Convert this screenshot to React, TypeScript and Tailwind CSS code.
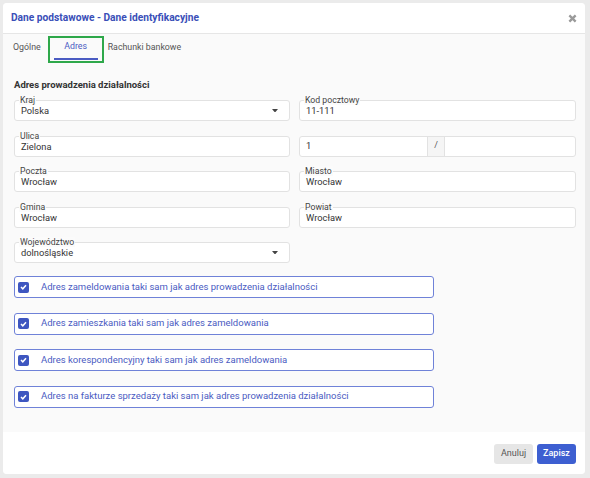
import React from 'react';

const font = { fontFamily: 'Roboto, "Liberation Sans", sans-serif' };

function Field({ label, value, select }: { label?: string; value: string; select?: boolean }) {
  return (
    <div className="relative h-[21px] rounded-[3px] border border-[#e2e2e2] bg-white flex items-center pl-[6px] pr-[8px]">
      {label && (
        <span className="absolute left-[4px] top-[-6px] px-[1px] bg-[#fbfbfb] text-[8.7px] leading-[10px] text-[#444]">
          {label}
        </span>
      )}
      <span className="flex-1 text-[9.3px] text-[#333] pt-[1px]">{value}</span>
      {select && (
        <svg width="6" height="3.5" viewBox="0 0 6 3.5" className="mr-[3px]">
          <path d="M0 0h6L3 3.5z" fill="#444" />
        </svg>
      )}
    </div>
  );
}

function Check({ text }: { text: string }) {
  return (
    <div className="h-[22px] w-[420px] rounded-[3px] border border-[#6f82d8] bg-white flex items-center pl-[3px] gap-[12px]">
      <span className="w-[11px] h-[11px] rounded-[2px] bg-[#3e56c0] flex items-center justify-center">
        <svg width="7" height="6" viewBox="0 0 7 6">
          <path d="M1 3l1.8 1.8L6 1.2" stroke="#fff" strokeWidth="1.5" fill="none" />
        </svg>
      </span>
      <span className="text-[9.5px] text-[#4a5bc2]">{text}</span>
    </div>
  );
}

export default function App() {
  return (
    <div className="w-[590px] h-[478px] bg-[#ebebeb] p-[3px] pr-[5px] pb-[4px]" style={font}>
      <div className="h-full rounded-[4px] bg-[#fafafa] flex flex-col overflow-hidden">
        <div className="h-[31px] bg-white border-b border-[#e6e6e6] flex items-center justify-between pl-[8px] pr-[8px] shrink-0">
          <span className="text-[10.2px] font-bold text-[#3a4fb8]">Dane podstawowe - Dane identyfikacyjne</span>
          <svg width="9" height="9" viewBox="0 0 10 10">
            <path d="M1.5 1.5l7 7M8.5 1.5l-7 7" stroke="#9a9a9a" strokeWidth="2.6" />
          </svg>
        </div>

        <div className="flex items-stretch h-[29px] pl-[10px] text-[8.8px]">
          <span className="flex items-center pb-[2px] text-[#555] mr-[7px]">Ogólne</span>
          <span className="w-[56px] h-[27px] border-2 border-[#2ea84a] flex flex-col items-center pt-[3px] mt-[2px]">
            <span className="text-[#4a5bc2] leading-[11px]">Adres</span>
            <span className="mt-auto mb-[1px] h-[2px] w-[44px] bg-[#4a5bc2]" />
          </span>
          <span className="flex items-center pb-[2px] pl-[4px] text-[#555]">Rachunki bankowe</span>
        </div>

        <div className="pl-[11px] pr-[9px] pt-[15px]">
          <div className="text-[9.5px] font-bold text-[#333] leading-[13px]">Adres prowadzenia działalności</div>
          <div className="grid grid-cols-[276px_277px] gap-x-[9px] gap-y-[14.5px] mt-[9px]">
            <Field label="Kraj" value="Polska" select />
            <Field label="Kod pocztowy" value="11-111" />
            <Field label="Ulica" value="Zielona" />
            <div className="h-[21px] rounded-[3px] border border-[#e2e2e2] bg-white flex text-[9.3px] text-[#333]">
              <span className="w-[128px] flex items-center pl-[6px] border-r border-[#e2e2e2]">1</span>
              <span className="w-[17px] flex items-center justify-center bg-[#f5f5f5] border-r border-[#e2e2e2] text-[9px] text-[#555]">/</span>
              <span className="flex-1" />
            </div>
            <Field label="Poczta" value="Wrocław" />
            <Field label="Miasto" value="Wrocław" />
            <Field label="Gmina" value="Wrocław" />
            <Field label="Powiat" value="Wrocław" />
            <Field label="Województwo" value="dolnośląskie" select />
          </div>

          <div className="flex flex-col gap-[14.5px] mt-[13px]">
            <Check text="Adres zameldowania taki sam jak adres prowadzenia działalności" />
            <Check text="Adres zamieszkania taki sam jak adres zameldowania" />
            <Check text="Adres korespondencyjny taki sam jak adres zameldowania" />
            <Check text="Adres na fakturze sprzedaży taki sam jak adres prowadzenia działalności" />
          </div>
        </div>

        <div className="mt-auto h-[42px] bg-white flex items-center justify-end gap-[4px] pr-[9px] pt-[1px]">
          <button className="h-[20px] w-[39px] rounded-[3px] bg-[#e6e6e6] text-[9px] text-[#555]">Anuluj</button>
          <button className="h-[20px] w-[39px] rounded-[3px] bg-[#3d5fd1] text-[9px] font-medium text-white">Zapisz</button>
        </div>
      </div>
    </div>
  );
}
